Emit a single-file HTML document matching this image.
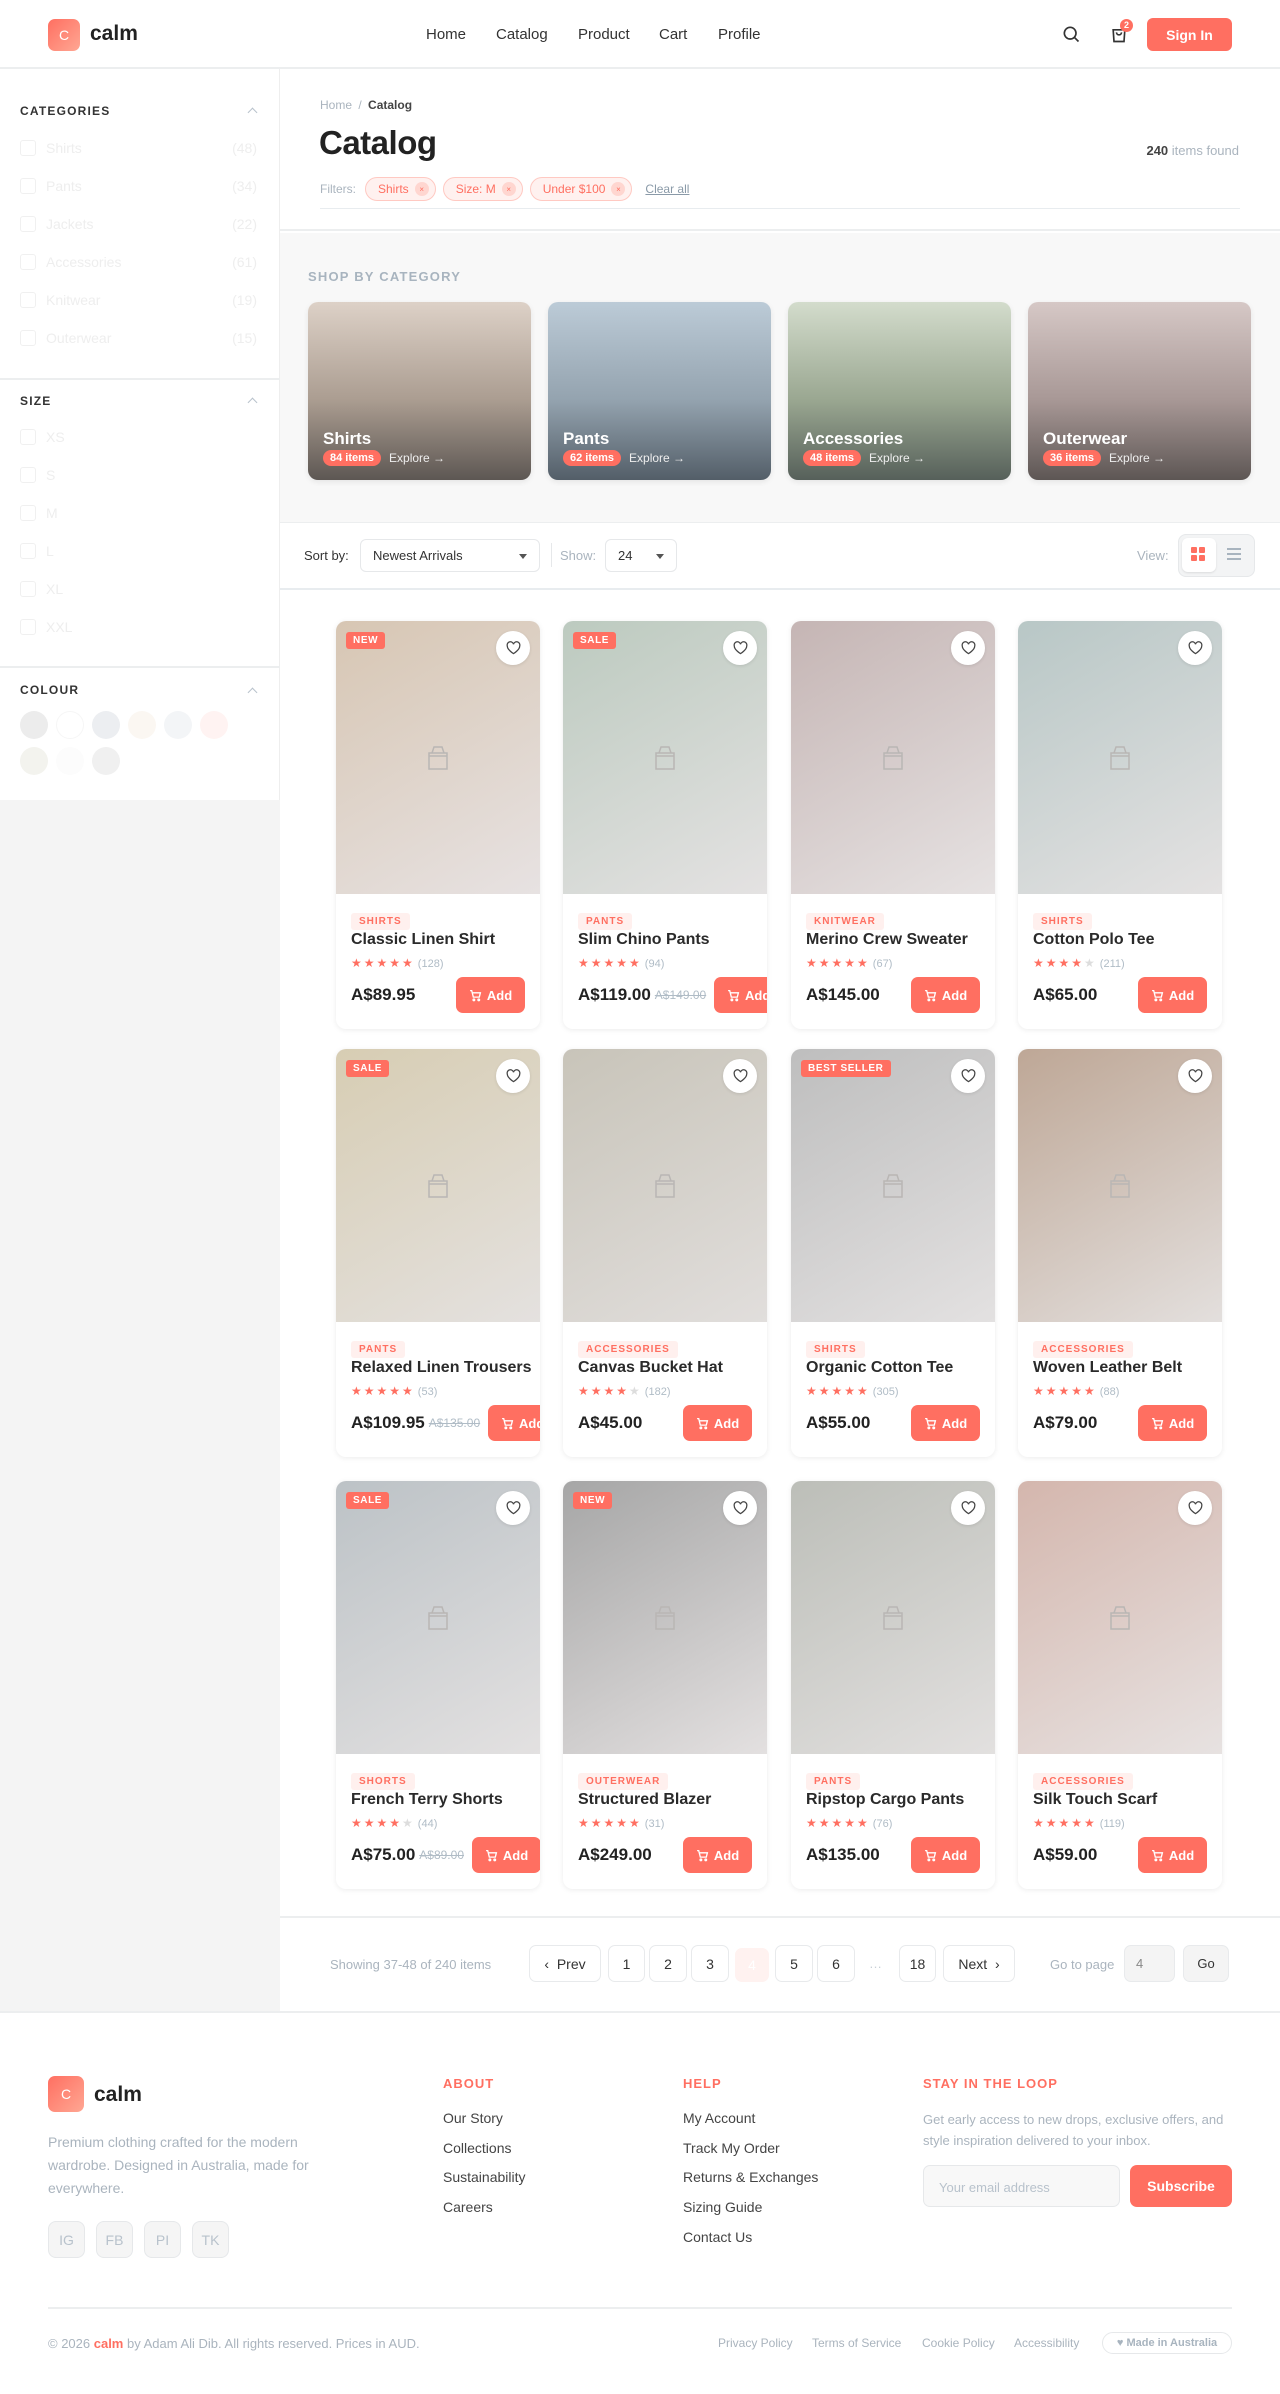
<!DOCTYPE html>
<html><head><meta charset="utf-8">
<style>
*{box-sizing:border-box;margin:0;padding:0}
body{width:1280px;height:2394px;position:relative;font-family:"Liberation Sans",sans-serif;background:#fff;color:#222;overflow:hidden}
.a{position:absolute}
.acc{color:#ff6f61}
.hdr{left:0;top:0;width:1280px;height:69px;border-bottom:2px solid #eceeef;background:#fff}
.logo{width:32px;height:32px;border-radius:7px;background:linear-gradient(135deg,#ff6f61,#ffa793);color:#fff;font-size:14px;display:flex;align-items:center;justify-content:center}
.nav a{position:absolute;top:26px;font-size:15px;color:#333;text-decoration:none}
.side{left:0;top:69px;width:280px;height:1942px;background:#f4f4f4}
.sidew{left:0;top:0;width:280px;height:731px;background:#fff;border-right:1px solid #eee}
.sh{font-size:12px;font-weight:bold;letter-spacing:1.2px;color:#333}
.chev{width:7px;height:7px;border-left:1.5px solid #b8c2cc;border-top:1.5px solid #b8c2cc;transform:rotate(45deg)}
.cb{width:16px;height:16px;border:1px solid #f0f0f0;border-radius:3px}
.sl{font-size:14px;color:#eeeeee}
.sw{width:28px;height:28px;border-radius:50%}
.chip{display:inline-flex;align-items:center;height:24px;padding:0 6px 0 12px;border:1px solid #ffc9c2;background:#fff1ef;border-radius:12px;font-size:12px;color:#ff6f61;margin-right:7px}
.chip i{font-style:normal;width:14px;height:14px;border-radius:50%;background:#ffd6d0;font-size:8px;display:inline-flex;align-items:center;justify-content:center;margin-left:6px}
.cat{top:302px;width:223px;height:178px;border-radius:10px;overflow:hidden;box-shadow:0 2px 6px rgba(0,0,0,.08)}
.cat b{position:absolute;left:15px;top:127px;color:#fff;font-size:17px}
.cat .ct{position:absolute;left:15px;top:148px;display:flex;align-items:center;font-size:12px;color:#eee}
.cat .ct span{background:#ff6f61;color:#fff;border-radius:9px;padding:2px 7px;font-weight:bold;font-size:11px;margin-right:8px}
.sel{height:33px;border:1px solid #e6e8ea;border-radius:6px;font-size:13px;color:#333;display:flex;align-items:center;padding-left:12px}
.sel:after{content:"";position:absolute;right:12px;top:14px;border-left:4px solid transparent;border-right:4px solid transparent;border-top:5px solid #555}
.card{width:204px;height:408px;border-radius:10px;background:#fff;box-shadow:0 1px 6px rgba(0,0,0,.08);overflow:hidden}
.img{position:absolute;left:0;top:0;width:204px;height:273px}
.bag{position:absolute;left:91px;top:123px;width:22px;height:26px}
.badge{position:absolute;left:10px;top:11px;height:17px;padding:0 7px;border-radius:3px;background:#ff6f61;color:#fff;font-size:10px;font-weight:bold;letter-spacing:.6px;line-height:17px}
.heart{position:absolute;right:10px;top:10px;width:34px;height:34px;border-radius:50%;background:#fff;display:flex;align-items:center;justify-content:center;box-shadow:0 1px 3px rgba(0,0,0,.1)}
.cc{position:absolute;left:15px;top:292px;height:17px;padding:0 8px;border-radius:3px;background:#fff0ee;color:#ff6f61;font-size:10px;font-weight:bold;letter-spacing:1px;line-height:17px}
.nm{position:absolute;left:15px;top:310px;font-size:16px;font-weight:bold;color:#2a2a2a;white-space:nowrap}
.st{position:absolute;left:15px;top:335px;font-size:12px;color:#ff6f61;letter-spacing:2px;white-space:nowrap}
.st em{font-style:normal;color:#ddd}
.st span{color:#b0bcc6;letter-spacing:0;margin-left:3px;font-size:11px}
.pr{position:absolute;left:15px;right:0;top:356px;height:36px;display:flex;align-items:center;white-space:nowrap}
.pr b{font-size:17px;color:#222}
.pr s{font-size:12px;color:#b0bcc6;margin-left:4px}
.add{flex:none;margin-left:auto;margin-right:15px;height:36px;width:69px;border-radius:7px;background:#ff6f61;color:#fff;font-size:13px;font-weight:bold;display:flex;align-items:center;justify-content:center;gap:5px}
.pr s + .add{margin-left:8px;margin-right:0}
.pb{top:1945px;height:37px;border:1px solid #e8eaec;border-radius:7px;font-size:14px;color:#333;display:flex;align-items:center;justify-content:center;background:#fff}
.fl{position:absolute;font-size:14px;color:#444}
.fh{position:absolute;top:2076px;font-size:13px;font-weight:bold;letter-spacing:1px;color:#ff6f61}
.soc{top:2221px;width:37px;height:37px;border:1px solid #e6e8ea;border-radius:8px;background:#f5f5f5;color:#b8c2cc;font-size:14px;display:flex;align-items:center;justify-content:center}
.bl{position:absolute;top:2336px;font-size:12px;color:#aab4be}
</style></head><body>

<!-- header -->
<div class="a hdr">
  <div class="a logo" style="left:48px;top:19px">C</div>
  <div class="a" style="left:90px;top:22px;font-size:21px;font-weight:bold;color:#222">calm</div>
  <div class="nav">
    <a style="left:426px">Home</a><a style="left:496px">Catalog</a><a style="left:578px">Product</a><a style="left:659px">Cart</a><a style="left:718px">Profile</a>
  </div>
  <svg class="a" style="left:1061px;top:24px" width="20" height="20" viewBox="0 0 24 24" fill="none" stroke="#333" stroke-width="2"><circle cx="11" cy="11" r="7"/><path d="M16 16l5 5"/></svg>
  <svg class="a" style="left:1109px;top:24px" width="20" height="20" viewBox="0 0 24 24" fill="none" stroke="#333" stroke-width="2"><path d="M5 7h14l-1 14H6z"/><path d="M9 10a3 3 0 006 0"/></svg>
  <div class="a" style="left:1120px;top:19px;width:13px;height:13px;border-radius:50%;background:#ff6f61;color:#fff;font-size:9px;font-weight:bold;text-align:center;line-height:13px">2</div>
  <div class="a" style="left:1147px;top:18px;width:85px;height:33px;border-radius:6px;background:#ff6f61;color:#fff;font-size:14px;font-weight:bold;display:flex;align-items:center;justify-content:center">Sign In</div>
</div>

<!-- sidebar -->
<div class="a side">
  <div class="a sidew">
    <div class="a sh" style="left:20px;top:35px">CATEGORIES</div><div class="a chev" style="left:249px;top:40px"></div>
    <div class="a cb" style="left:20px;top:71px"></div><div class="a sl" style="left:46px;top:71px">Shirts</div><div class="a sl" style="right:22px;top:71px">(48)</div>
    <div class="a cb" style="left:20px;top:109px"></div><div class="a sl" style="left:46px;top:109px">Pants</div><div class="a sl" style="right:22px;top:109px">(34)</div>
    <div class="a cb" style="left:20px;top:147px"></div><div class="a sl" style="left:46px;top:147px">Jackets</div><div class="a sl" style="right:22px;top:147px">(22)</div>
    <div class="a cb" style="left:20px;top:185px"></div><div class="a sl" style="left:46px;top:185px">Accessories</div><div class="a sl" style="right:22px;top:185px">(61)</div>
    <div class="a cb" style="left:20px;top:223px"></div><div class="a sl" style="left:46px;top:223px">Knitwear</div><div class="a sl" style="right:22px;top:223px">(19)</div>
    <div class="a cb" style="left:20px;top:261px"></div><div class="a sl" style="left:46px;top:261px">Outerwear</div><div class="a sl" style="right:22px;top:261px">(15)</div>
    <div class="a" style="left:0;top:309px;width:280px;border-top:2px solid #eceeef"></div>
    <div class="a sh" style="left:20px;top:325px">SIZE</div><div class="a chev" style="left:249px;top:330px"></div>
    <div class="a cb" style="left:20px;top:360px"></div><div class="a sl" style="left:46px;top:360px">XS</div>
    <div class="a cb" style="left:20px;top:398px"></div><div class="a sl" style="left:46px;top:398px">S</div>
    <div class="a cb" style="left:20px;top:436px"></div><div class="a sl" style="left:46px;top:436px">M</div>
    <div class="a cb" style="left:20px;top:474px"></div><div class="a sl" style="left:46px;top:474px">L</div>
    <div class="a cb" style="left:20px;top:512px"></div><div class="a sl" style="left:46px;top:512px">XL</div>
    <div class="a cb" style="left:20px;top:550px"></div><div class="a sl" style="left:46px;top:550px">XXL</div>
    <div class="a" style="left:0;top:597px;width:280px;border-top:2px solid #eceeef"></div>
    <div class="a sh" style="left:20px;top:614px">COLOUR</div><div class="a chev" style="left:249px;top:620px"></div>
    <div class="a sw" style="left:20px;top:642px;background:#ececec"></div>
    <div class="a sw" style="left:56px;top:642px;background:#fff;border:1px solid #f6f6f6"></div>
    <div class="a sw" style="left:92px;top:642px;background:#eceef1"></div>
    <div class="a sw" style="left:128px;top:642px;background:#fbf7f2"></div>
    <div class="a sw" style="left:164px;top:642px;background:#f3f5f7"></div>
    <div class="a sw" style="left:200px;top:642px;background:#fff3f2"></div>
    <div class="a sw" style="left:20px;top:678px;background:#f3f3ee"></div>
    <div class="a sw" style="left:56px;top:678px;background:#fcfcfc"></div>
    <div class="a sw" style="left:92px;top:678px;background:#f0f0f0"></div>
  </div>
</div>

<!-- page header -->
<div class="a" style="left:280px;top:69px;width:1000px;height:162px;border-bottom:2px solid #eceeef;background:#fff"></div>
<div class="a" style="left:320px;top:98px;font-size:12px;color:#aab4be">Home <span style="margin:0 3px">/</span> <b style="color:#444">Catalog</b></div>
<div class="a" style="left:319px;top:124px;font-size:33px;font-weight:bold;color:#222;letter-spacing:-.5px">Catalog</div>
<div class="a" style="right:41px;top:143px;font-size:13px;color:#aab4be"><b style="color:#444">240</b> items found</div>
<div class="a" style="left:320px;top:177px;display:flex;align-items:center"><span style="font-size:12px;color:#aab4be;margin-right:9px">Filters:</span>
<span class="chip">Shirts<i>×</i></span><span class="chip">Size: M<i>×</i></span><span class="chip">Under $100<i>×</i></span>
<span style="font-size:12px;color:#8a9aa8;text-decoration:underline;margin-left:6px">Clear all</span></div>
<div class="a" style="left:320px;top:208px;width:920px;border-top:1px solid #e8ecef"></div>

<!-- categories -->
<div class="a" style="left:280px;top:233px;width:1000px;height:289px;background:#f8f8f8"></div>
<div class="a" style="left:308px;top:269px;font-size:13px;font-weight:bold;letter-spacing:1.2px;color:#a8b4bf">SHOP BY CATEGORY</div>
<div class="a cat" style="left:308px;background:linear-gradient(180deg,#ddd1c7,#ab9d91 55%,#5d5753)"><b>Shirts</b><div class="ct"><span>84 items</span>Explore →</div></div>
<div class="a cat" style="left:548px;background:linear-gradient(180deg,#bccbd7,#94a3af 55%,#535e68)"><b>Pants</b><div class="ct"><span>62 items</span>Explore →</div></div>
<div class="a cat" style="left:788px;background:linear-gradient(180deg,#d3dccc,#9aa791 55%,#56605a)"><b>Accessories</b><div class="ct"><span>48 items</span>Explore →</div></div>
<div class="a cat" style="left:1028px;background:linear-gradient(180deg,#d6c8c6,#a89896 55%,#5d5654)"><b>Outerwear</b><div class="ct"><span>36 items</span>Explore →</div></div>

<!-- toolbar -->
<div class="a" style="left:280px;top:522px;width:1000px;height:68px;background:#fff;border-top:1px solid #eceeef;border-bottom:2px solid #e8ecef"></div>
<div class="a" style="left:304px;top:548px;font-size:13px;color:#333">Sort by:</div>
<div class="a sel" style="left:360px;top:539px;width:180px">Newest Arrivals</div>
<div class="a" style="left:551px;top:543px;height:24px;border-left:1px solid #e6e8ea"></div>
<div class="a" style="left:560px;top:548px;font-size:13px;color:#aab4be">Show:</div>
<div class="a sel" style="left:605px;top:539px;width:72px">24</div>
<div class="a" style="left:1137px;top:548px;font-size:13px;color:#aab4be">View:</div>
<div class="a" style="left:1178px;top:534px;width:77px;height:43px;border:1px solid #e6e8ea;border-radius:8px;background:#f3f4f5"></div>
<div class="a" style="left:1182px;top:538px;width:34px;height:34px;border-radius:6px;background:#fff;box-shadow:0 1px 2px rgba(0,0,0,.1)"></div>
<svg class="a" style="left:1191px;top:547px" width="15" height="15" viewBox="0 0 15 15" fill="#ff6f61"><rect x="0" y="0" width="6" height="6" rx="1"/><rect x="8" y="0" width="6" height="6" rx="1"/><rect x="0" y="8" width="6" height="6" rx="1"/><rect x="8" y="8" width="6" height="6" rx="1"/></svg>
<svg class="a" style="left:1227px;top:548px" width="14" height="13" viewBox="0 0 14 13" fill="#a8b4bf"><rect y="0" width="14" height="2"/><rect y="5" width="14" height="2"/><rect y="10" width="14" height="2"/></svg>

<!-- products -->
<div id="grid"></div>
<script>
const P=[
["NEW","SHIRTS","Classic Linen Shirt",5,128,"A$89.95","","#d7c6b3","#e7e2e2"],
["SALE","PANTS","Slim Chino Pants",5,94,"A$119.00","A$149.00","#bccabf","#e4e2e2"],
["","KNITWEAR","Merino Crew Sweater",5,67,"A$145.00","","#c5b5b4","#e6e2e2"],
["","SHIRTS","Cotton Polo Tee",4,211,"A$65.00","","#b8c7c6","#e4e2e2"],
["SALE","PANTS","Relaxed Linen Trousers",5,53,"A$109.95","A$135.00","#d7cdb3","#e4e1df"],
["","ACCESSORIES","Canvas Bucket Hat",4,182,"A$45.00","","#c8c4b9","#e1dedc"],
["BEST SELLER","SHIRTS","Organic Cotton Tee",5,305,"A$55.00","","#bebebe","#e3e1e1"],
["","ACCESSORIES","Woven Leather Belt",5,88,"A$79.00","","#bea796","#e3dfdd"],
["SALE","SHORTS","French Terry Shorts",4,44,"A$75.00","A$89.00","#bcc2c6","#e3e1e1"],
["NEW","OUTERWEAR","Structured Blazer",5,31,"A$249.00","","#a6a6a6","#e3e0e0"],
["","PANTS","Ripstop Cargo Pants",5,76,"A$135.00","","#bcbeb8","#e2e0df"],
["","ACCESSORIES","Silk Touch Scarf",5,119,"A$59.00","","#d4b6ad","#e7e2e1"]];
const L=[336,563,791,1018],T=[621,1049,1481];
let h="";
P.forEach((p,i)=>{
 const x=L[i%4],y=T[Math.floor(i/4)];
 let st="★".repeat(p[3])+(p[3]<5?"<em>★</em>":"");
 h+=`<div class="a card" style="left:${x}px;top:${y}px"><div class="img" style="background:linear-gradient(150deg,${p[7]},${p[8]})"></div>
 <svg class="bag" viewBox="0 0 22 26" fill="none" stroke="#b9b6b4" stroke-width="1.5"><path d="M2 9h18v16H2z"/><path d="M5 9l2-6h8l2 6"/><path d="M2 12h18"/></svg>
 ${p[0]?`<div class="badge">${p[0]}</div>`:""}
 <div class="heart"><svg width="15" height="14" viewBox="0 0 24 22" fill="none" stroke="#444" stroke-width="2"><path d="M12 20S2 14 2 7.5A5 5 0 0112 5a5 5 0 0110 2.5C22 14 12 20 12 20z"/></svg></div>
 <div class="cc">${p[1]}</div><div class="nm">${p[2]}</div>
 <div class="st">${st}<span>(${p[4]})</span></div>
 <div class="pr"><b>${p[5]}</b>${p[6]?`<s>${p[6]}</s>`:""}<div class="add"><svg width="13" height="13" viewBox="0 0 24 24" fill="none" stroke="#fff" stroke-width="2.5"><path d="M2 3h3l3 12h11l2-8H7"/><circle cx="9" cy="20" r="1.5"/><circle cx="18" cy="20" r="1.5"/></svg>Add</div></div></div>`;
});
document.getElementById("grid").innerHTML=h;
</script>

<!-- pagination -->
<div class="a" style="left:280px;top:1916px;width:1000px;height:95px;border-top:2px solid #eceeef;background:#fff"></div>
<div class="a" style="left:330px;top:1957px;font-size:13px;color:#aab4be">Showing 37-48 of 240 items</div>
<div class="a pb" style="left:529px;width:72px">‹&nbsp; Prev</div>
<div class="a pb" style="left:608px;width:37px">1</div>
<div class="a pb" style="left:649px;width:38px">2</div>
<div class="a pb" style="left:691px;width:38px">3</div>
<div class="a pb" style="left:735px;width:34px;top:1948px;height:34px;background:#fff2f0;border-color:#fff2f0;color:#fff">4</div>
<div class="a pb" style="left:775px;width:38px">5</div>
<div class="a pb" style="left:817px;width:38px">6</div>
<div class="a" style="left:869px;top:1956px;font-size:13px;color:#c8d0d6">…</div>
<div class="a pb" style="left:899px;width:37px">18</div>
<div class="a pb" style="left:943px;width:72px">Next &nbsp;›</div>
<div class="a" style="left:1050px;top:1957px;font-size:13px;color:#aab4be">Go to page</div>
<div class="a pb" style="left:1124px;width:51px;background:#f4f4f4;color:#888;justify-content:flex-start;padding-left:11px;font-size:13px">4</div>
<div class="a pb" style="left:1183px;width:46px;background:#f4f4f4;font-size:13px">Go</div>

<!-- footer -->
<div class="a" style="left:0;top:2011px;width:1280px;border-top:2px solid #eceeef"></div>
<div class="a logo" style="left:48px;top:2076px;width:36px;height:36px">C</div>
<div class="a" style="left:94px;top:2083px;font-size:21px;font-weight:bold;color:#222">calm</div>
<div class="a" style="left:48px;top:2131px;width:300px;font-size:14px;line-height:23px;color:#aab4be">Premium clothing crafted for the modern wardrobe. Designed in Australia, made for everywhere.</div>
<div class="a soc" style="left:48px">IG</div><div class="a soc" style="left:96px">FB</div><div class="a soc" style="left:144px">PI</div><div class="a soc" style="left:192px">TK</div>
<div class="fh" style="left:443px">ABOUT</div>
<div class="fl" style="left:443px;top:2110px">Our Story</div><div class="fl" style="left:443px;top:2140px">Collections</div><div class="fl" style="left:443px;top:2169px">Sustainability</div><div class="fl" style="left:443px;top:2199px">Careers</div>
<div class="fh" style="left:683px">HELP</div>
<div class="fl" style="left:683px;top:2110px">My Account</div><div class="fl" style="left:683px;top:2140px">Track My Order</div><div class="fl" style="left:683px;top:2169px">Returns &amp; Exchanges</div><div class="fl" style="left:683px;top:2199px">Sizing Guide</div><div class="fl" style="left:683px;top:2229px">Contact Us</div>
<div class="fh" style="left:923px">STAY IN THE LOOP</div>
<div class="a" style="left:923px;top:2109px;width:310px;font-size:13px;line-height:21px;color:#aab4be">Get early access to new drops, exclusive offers, and style inspiration delivered to your inbox.</div>
<div class="a" style="left:923px;top:2165px;width:197px;height:42px;border:1px solid #e6e8ea;border-radius:7px;background:#f8f8f8;font-size:13px;color:#b8c2cc;padding:14px 0 0 15px">Your email address</div>
<div class="a" style="left:1130px;top:2165px;width:102px;height:42px;border-radius:7px;background:#ff6f61;color:#fff;font-size:14px;font-weight:bold;display:flex;align-items:center;justify-content:center">Subscribe</div>
<div class="a" style="left:48px;top:2307px;width:1184px;border-top:2px solid #eceeef"></div>
<div class="bl" style="left:48px;font-size:13px">© 2026 <b class="acc">calm</b> by Adam Ali Dib. All rights reserved. Prices in AUD.</div>
<div class="bl" style="left:718px">Privacy Policy</div><div class="bl" style="left:812px">Terms of Service</div><div class="bl" style="left:922px">Cookie Policy</div><div class="bl" style="left:1014px">Accessibility</div>
<div class="a" style="left:1102px;top:2332px;width:130px;height:22px;border:1px solid #e6e8ea;border-radius:11px;font-size:11px;font-weight:bold;color:#a8b4bf;display:flex;align-items:center;justify-content:center">♥ Made in Australia</div>
</body></html>
